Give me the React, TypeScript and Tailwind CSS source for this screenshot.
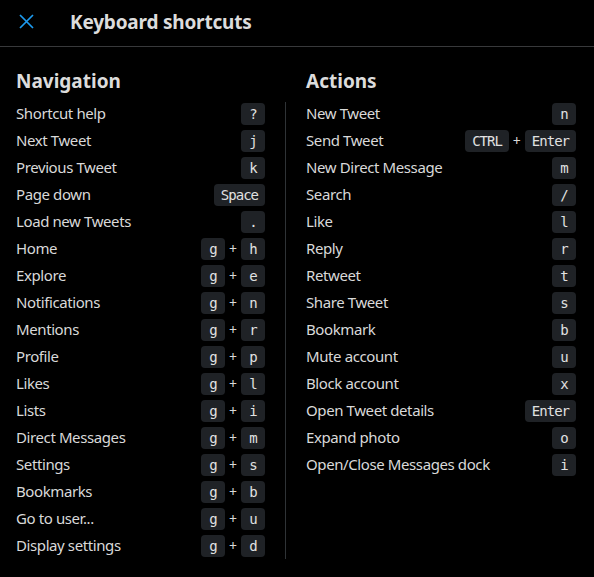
import { Fragment } from "react";

type Shortcut = { label: string; keys: string[] };

const navigation: Shortcut[] = [
  { label: "Shortcut help", keys: ["?"] },
  { label: "Next Tweet", keys: ["j"] },
  { label: "Previous Tweet", keys: ["k"] },
  { label: "Page down", keys: ["Space"] },
  { label: "Load new Tweets", keys: ["."] },
  { label: "Home", keys: ["g", "h"] },
  { label: "Explore", keys: ["g", "e"] },
  { label: "Notifications", keys: ["g", "n"] },
  { label: "Mentions", keys: ["g", "r"] },
  { label: "Profile", keys: ["g", "p"] },
  { label: "Likes", keys: ["g", "l"] },
  { label: "Lists", keys: ["g", "i"] },
  { label: "Direct Messages", keys: ["g", "m"] },
  { label: "Settings", keys: ["g", "s"] },
  { label: "Bookmarks", keys: ["g", "b"] },
  { label: "Go to user...", keys: ["g", "u"] },
  { label: "Display settings", keys: ["g", "d"] },
];

const actions: Shortcut[] = [
  { label: "New Tweet", keys: ["n"] },
  { label: "Send Tweet", keys: ["CTRL", "Enter"] },
  { label: "New Direct Message", keys: ["m"] },
  { label: "Search", keys: ["/"] },
  { label: "Like", keys: ["l"] },
  { label: "Reply", keys: ["r"] },
  { label: "Retweet", keys: ["t"] },
  { label: "Share Tweet", keys: ["s"] },
  { label: "Bookmark", keys: ["b"] },
  { label: "Mute account", keys: ["u"] },
  { label: "Block account", keys: ["x"] },
  { label: "Open Tweet details", keys: ["Enter"] },
  { label: "Expand photo", keys: ["o"] },
  { label: "Open/Close Messages dock", keys: ["i"] },
];

function Key({ k }: { k: string }) {
  return (
    <span className="h-[22px] min-w-[24px] px-[7px] rounded-[4px] bg-[#1f2226] flex items-center justify-center text-[14px] leading-none text-[#e1e1e1] font-['DejaVu_Sans_Mono',monospace] tracking-[-1px]">
      {k}
    </span>
  );
}

function ShortcutList({ items }: { items: Shortcut[] }) {
  return (
    <div className="flex flex-col">
      {items.map((s) => (
        <div key={s.label} className="h-[27px] flex items-center justify-between">
          <span className="text-[15px] tracking-[-0.4px] text-[#d9d9d9]">{s.label}</span>
          <div className="flex items-center">
            {s.keys.map((k, i) => (
              <Fragment key={k}>
                {i > 0 && <span className="w-4 text-center text-[14px] text-[#d9d9d9]">+</span>}
                <Key k={k} />
              </Fragment>
            ))}
          </div>
        </div>
      ))}
    </div>
  );
}

export default function App() {
  return (
    <div className="w-[594px] h-[577px] bg-black text-[#d9d9d9] font-['Noto_Sans',sans-serif] overflow-hidden">
      <header className="h-[47px] flex items-center border-b border-[#38393b]">
        <button className="ml-[17px] mt-[-4px] w-[19px] h-[19px] flex items-center justify-center text-[#1d9bf0]">
          <svg width="17" height="17" viewBox="0 0 17 17" fill="none" stroke="currentColor" strokeWidth="1.7">
            <path d="M2 2L15 15M15 2L2 15" />
          </svg>
        </button>
        <h1 className="ml-[34px] mt-[-2px] text-[19px] font-bold tracking-[-0.2px] text-[#dcdcdc]">Keyboard shortcuts</h1>
      </header>

      <div className="grid grid-cols-[249px_1px_1fr] gap-x-5 pl-4 pr-[18px] pt-[22px]">
        <h2 className="h-[24px] mb-[7px] text-[19px] font-bold leading-6 text-[#dcdcdc]">Navigation</h2>
        <div />
        <h2 className="h-[24px] mb-[7px] text-[19px] font-bold leading-6 text-[#dcdcdc]">Actions</h2>

        <ShortcutList items={navigation} />
        <div className="bg-[#2f3336] mt-[2px]" />
        <div>
          <ShortcutList items={actions} />
        </div>
      </div>
    </div>
  );
}
